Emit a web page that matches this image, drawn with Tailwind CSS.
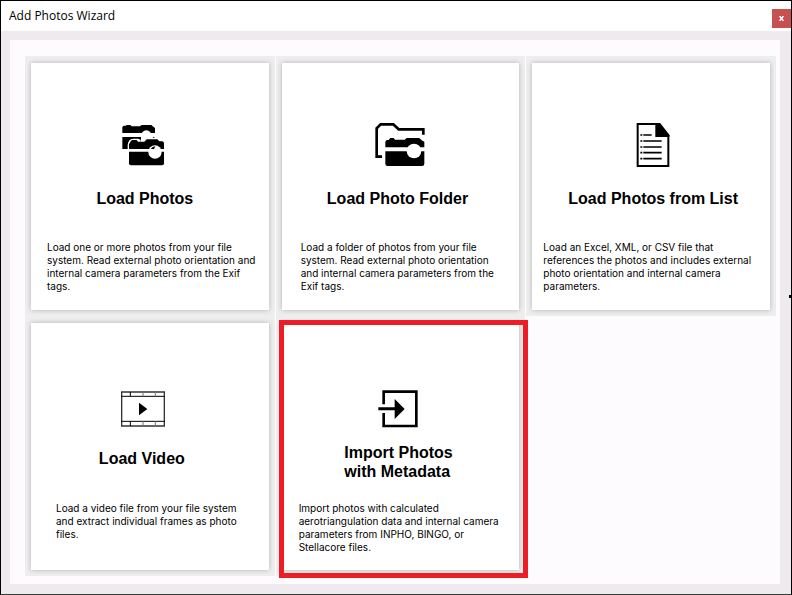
<!DOCTYPE html>
<html lang="en">
<head>
  <meta charset="UTF-8">
  <meta name="viewport" content="width=device-width, initial-scale=1.0">
  <title>Add Photos Wizard</title>
  <script src="https://cdn.jsdelivr.net/npm/@tailwindcss/browser@4"></script>
</head>
<body class="min-h-screen flex flex-col border border-black border-b-[#3a3a3a] bg-[#eeeaed] text-black font-['Liberation_Sans',Arial,sans-serif]">
  <!-- Title bar -->
  <header class="h-[30px] shrink-0 flex items-center justify-between bg-white">
    <h1 class="pl-2 text-[12px] leading-4 font-['Open_Sans','Noto_Sans',sans-serif]">Add Photos Wizard</h1>
    <button type="button" aria-label="Close" class="mt-1 size-[19px] flex items-center justify-center bg-[#c75050] text-white">
      <svg class="w-[5px] h-[5px]" viewBox="0 0 5 5" stroke="currentColor" stroke-width="1.5"><path d="M0.5 0L4.5 5M4.5 0L0.5 5"/></svg>
    </button>
  </header>

  <main class="relative flex-1 flex pt-[9px] pl-[9px] pr-[11px] pb-[10px]">
    <div class="flex-1 bg-[#fefbff] pt-4 pl-[15px] pr-1 pb-2">
      <div class="grid grid-cols-3 gap-x-px">

        <!-- Load Photos -->
        <div class="bg-[#eeeeee] pt-[7px] pb-[6px] px-[6px]">
          <button type="button" class="w-full min-h-[247px] h-full flex flex-col justify-start bg-white pt-[58px] shadow-[0_0_5px_rgba(0,0,0,0.25)]">
            <span class="w-full h-12 flex items-center justify-center pr-3">
              <svg class="w-[44px] h-[42px]" viewBox="36 27 132 126">
                <path d="M37 54V36L41 32H47L51 30H61L65 34H90L95 30H124L130 35L135 39V54Z"/>
                <path d="M37 66H93V102H37Z"/>
                <circle cx="109" cy="62" r="16" fill="white"/>
                <path d="M53 102V90Q54 72 70 71H84L92 74V102Z" fill="white"/>
                <path d="M57 102V88L61 80L66 75H80L84 80H103L110 73H142L148 79H158L162 83V102Z"/>
                <path d="M57 110H162V145Q162 151 156 151H63Q57 151 57 145Z"/>
                <circle cx="135" cy="111" r="20" fill="white"/>
                <path d="M122 102L128 96L136 94L132 102Z"/>
                <path d="M127 68L131 65L135 68Z"/>
              </svg>
            </span>
            <span class="w-full mt-5 pr-[10px] text-center text-[16px] leading-[19px] font-bold">Load Photos</span>
            <span class="mt-[33px] pl-4 text-left text-[10px] leading-[13px] whitespace-nowrap font-[Inter,'Liberation_Sans',sans-serif]">Load one or more photos from your file<br>system. Read external photo orientation and<br>internal camera parameters from the Exif<br>tags.</span>
          </button>
        </div>

        <!-- Load Photo Folder -->
        <div class="bg-[#eeeeee] pt-[7px] pb-[6px] px-[6px]">
          <button type="button" class="w-full min-h-[247px] h-full flex flex-col justify-start bg-white pt-[58px] shadow-[0_0_5px_rgba(0,0,0,0.25)]">
            <span class="w-full h-12 flex items-center justify-center">
              <svg class="w-[50px] h-[44px]" viewBox="29 27 150 132">
                <path d="M50 128H34V43L46 31H84L100 46H174V62" fill="none" stroke="black" stroke-width="8"/>
                <path d="M60 100V83L64 78H70L75 72H85L89 77H118L124 72H162L168 78L177 83V100Z"/>
                <path d="M60 112H177V149Q177 156 170 156H67Q60 156 60 149Z"/>
                <circle cx="146" cy="111" r="22" fill="white"/>
              </svg>
            </span>
            <span class="w-full mt-5 pr-[6px] text-center text-[16px] leading-[19px] font-bold">Load Photo Folder</span>
            <span class="mt-[33px] pl-[19px] text-left text-[10px] leading-[13px] whitespace-nowrap font-[Inter,'Liberation_Sans',sans-serif]">Load a folder of photos from your file<br>system. Read external photo orientation<br>and internal camera parameters from the<br>Exif tags.</span>
          </button>
        </div>

        <!-- Load Photos from List -->
        <div class="bg-[#eeeeee] pt-[7px] pb-[6px] px-[6px]">
          <button type="button" class="w-full min-h-[247px] h-full flex flex-col justify-start bg-white pt-[58px] shadow-[0_0_5px_rgba(0,0,0,0.25)]">
            <span class="w-full h-12 flex items-center justify-center pl-1">
              <svg class="w-[34px] h-[44px]" viewBox="47 24 102 132">
                <path d="M52 27H118L144 60V153H52Z" fill="white" stroke="black" stroke-width="6"/>
                <path d="M105 27H119L147 61V66H105Z"/>
                <path d="M60 60H66M69 60H94M60 78H66M69 78H124M60 96H66M69 96H124M60 113H66M69 113H124M60 131H66M69 131H124" stroke="black" stroke-width="5"/>
              </svg>
            </span>
            <span class="w-full mt-5 pl-1 text-center text-[16px] leading-[19px] font-bold">Load Photos from List</span>
            <span class="mt-[33px] pl-[11px] text-left text-[10px] leading-[13px] whitespace-nowrap font-[Inter,'Liberation_Sans',sans-serif]">Load an Excel, XML, or CSV file that<br>references the photos and includes external<br>photo orientation and internal camera<br>parameters.</span>
          </button>
        </div>

        <!-- Load Video -->
        <div class="bg-[#eeeeee] pt-[7px] pb-[6px] px-[6px]">
          <button type="button" class="w-full min-h-[247px] h-full flex flex-col justify-start bg-white pt-[62px] shadow-[0_0_5px_rgba(0,0,0,0.25)]">
            <span class="w-full h-12 flex items-center justify-center pr-[14px]">
              <svg class="w-[44px] h-[36px]" viewBox="33 33 132 108">
                <path d="M35 36H163V138H35Z" fill="none" stroke="#333" stroke-width="4"/>
                <path d="M34 49H163M34 124H163" stroke="black" stroke-width="3"/>
                <path d="M61 36V49M61 124V138" stroke="black" stroke-width="3"/>
                <path d="M99 36V49M99 124V138M136 36V49M136 124V138" stroke="#777" stroke-width="3"/>
                <path d="M87 68L112 87L87 106Z"/>
              </svg>
            </span>
            <span class="w-full mt-4 pr-4 text-center text-[16px] leading-[19px] font-bold">Load Video</span>
            <span class="mt-[34px] pl-[25px] text-left text-[10px] leading-[13px] whitespace-nowrap font-[Inter,'Liberation_Sans',sans-serif]">Load a video file from your file system<br>and extract individual frames as photo<br>files.</span>
          </button>
        </div>

        <!-- Import Photos with Metadata -->
        <div class="relative bg-[#eeeeee] pt-[7px] pb-[6px] px-[6px]">
          <button type="button" class="w-full min-h-[247px] h-full flex flex-col justify-start bg-white pt-[62px] shadow-[0_0_5px_rgba(0,0,0,0.25)]">
            <span class="w-full h-12 flex items-center justify-center pr-1">
              <svg class="w-[40px] h-[38px]" viewBox="38 29 120 114">
                <path d="M55 72V34H153V137H55V98" fill="none" stroke="black" stroke-width="8"/>
                <path d="M39 81H88V56L118 86L88 116V90H39Z"/>
              </svg>
            </span>
            <span class="w-full mt-[10px] pr-1 flex justify-center">
              <span class="text-left text-[16px] leading-[19px] font-bold">Import Photos<br>with Metadata</span>
            </span>
            <span class="mt-[21px] pl-[17px] text-left text-[10px] leading-[13px] whitespace-nowrap font-[Inter,'Liberation_Sans',sans-serif]">Import photos with calculated<br>aerotriangulation data and internal camera<br>parameters from INPHO, BINGO, or<br>Stellacore files.</span>
          </button>
          <div class="absolute left-[3px] -right-[3px] top-1 -bottom-[2px] border-5 border-[#ee1c25] pointer-events-none"></div>
        </div>

      </div>
    </div>
    <div class="absolute right-0 top-[264px] w-[2px] h-[3px] bg-black"></div>
  </main>
</body>
</html>
